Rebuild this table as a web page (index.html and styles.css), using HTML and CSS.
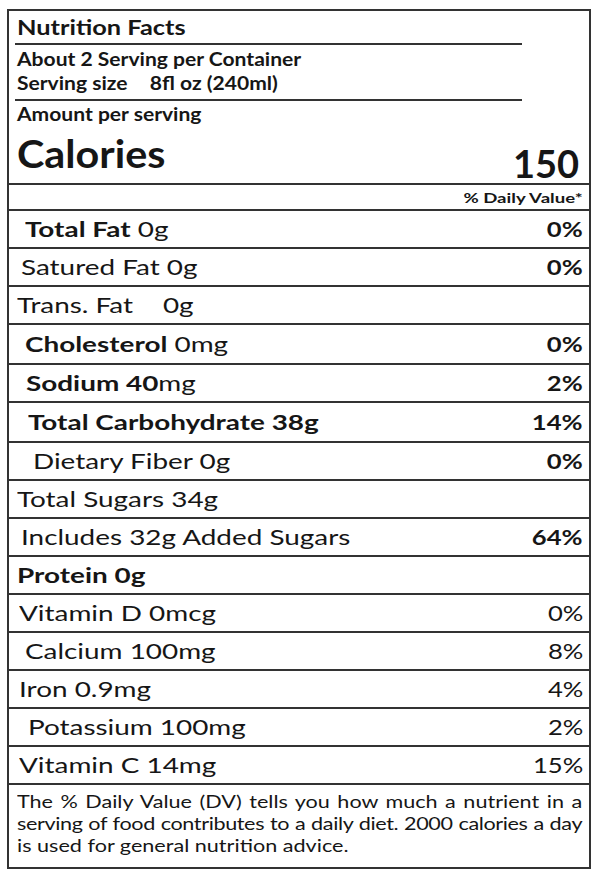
FILE: index.html
```html
<!DOCTYPE html>
<html lang="en">
<head>
<meta charset="utf-8">
<title>Nutrition Facts</title>
<link rel="stylesheet" href="styles.css">
</head>
<body>
<div class="label">
  <div class="top">
    <div class="title"><span class="title-text">Nutrition Facts</span></div>
    <div class="serving">
      <div><span class="head-text">About 2 Serving per Container</span></div>
      <div><span class="head-text">Serving size<span class="gap"></span>8fl oz (240ml)</span></div>
    </div>
    <div class="amount"><span class="head-text">Amount per serving</span></div>
    <div class="calories">
      <span class="cal-name">Calories</span>
      <span class="cal-value">150</span>
    </div>
  </div>
  <div class="dv-head"><span class="dv-text">% Daily Value*</span></div>

  <div class="row i4"><span class="lbl"><b>Total Fat</b> 0g</span><span class="pct b">0%</span></div>
  <div class="row i2"><span class="lbl">Satured Fat 0g</span><span class="pct b">0%</span></div>
  <div class="row i0"><span class="lbl">Trans. Fat<span class="gap"></span>0g</span><span class="pct"></span></div>
  <div class="row i4 tall"><span class="lbl"><b>Cholesterol</b> 0mg</span><span class="pct b">0%</span></div>
  <div class="row i5"><span class="lbl"><b>Sodium 40</b>mg</span><span class="pct b">2%</span></div>
  <div class="row i6 tall"><span class="lbl"><b>Total Carbohydrate 38g</b></span><span class="pct b">14%</span></div>
  <div class="row i7"><span class="lbl">Dietary Fiber 0g</span><span class="pct b">0%</span></div>
  <div class="row i0"><span class="lbl">Total Sugars 34g</span><span class="pct"></span></div>
  <div class="row i2"><span class="lbl">Includes 32g Added Sugars</span><span class="pct b">64%</span></div>
  <div class="row i0"><span class="lbl"><b>Protein 0g</b></span><span class="pct"></span></div>
  <div class="row i1"><span class="lbl">Vitamin D 0mcg</span><span class="pct">0%</span></div>
  <div class="row i4"><span class="lbl">Calcium 100mg</span><span class="pct">8%</span></div>
  <div class="row i1"><span class="lbl">Iron 0.9mg</span><span class="pct">4%</span></div>
  <div class="row i6"><span class="lbl">Potassium 100mg</span><span class="pct">2%</span></div>
  <div class="row i1"><span class="lbl">Vitamin C 14mg</span><span class="pct">15%</span></div>

  <div class="note">
    <div class="note-inner">
      <span class="note-line just">The % Daily Value (DV) tells you how much a nutrient in a</span>
      <span class="note-line just tight">serving of food contributes to a daily diet. 2000 calories a day</span>
      <span class="note-line">is used for general nutrition advice.</span>
    </div>
  </div>
</div>
</body>
</html>
```
FILE: styles.css
```css
* { box-sizing: border-box; }

html, body {
  margin: 0;
  padding: 0;
  background: #fff;
}

body {
  font-family: Lato, "Open Sans", "Liberation Sans", sans-serif;
  color: #161616;
}

.label {
  width: 584px;
  margin: 9px 0 0 7px;
  border: 2px solid #333;
}

/* ---------- top block ---------- */
.top {
  padding: 0 10px 0 6px;
  border-bottom: 2px solid #333;
}

.title {
  width: 507px;
  height: 34px;
  font-size: 21.5px;
  font-weight: 700;
  line-height: 32px;
  padding-left: 2px;
  border-bottom: 2px solid #333;
}

.title-text {
  display: inline-block;
  transform: scaleX(1.18);
  transform-origin: left center;
}

.serving {
  width: 507px;
  padding: 2px 0 4px 2px;
  font-size: 18px;
  font-weight: 700;
  line-height: 24px;
  border-bottom: 2px solid #333;
}

.head-text {
  display: inline-block;
  transform: scaleX(1.17);
  transform-origin: left center;
}

.serving .gap { width: 19px; }

.gap {
  display: inline-block;
  width: 22px;
}

.amount {
  padding-left: 2px;
  font-size: 18px;
  font-weight: 700;
  line-height: 26px;
}

.calories {
  display: flex;
  justify-content: space-between;
  align-items: flex-start;
  height: 56px;
  padding-left: 2px;
}

.cal-name {
  display: inline-block;
  font-size: 39px;
  font-weight: 700;
  line-height: 46px;
  padding-top: 3px;
  transform: scaleX(1.06);
  transform-origin: left center;
}

.cal-value {
  font-size: 38px;
  font-weight: 700;
  line-height: 42px;
  padding-top: 15px;
}

/* ---------- daily value header ---------- */
.dv-head {
  height: 26px;
  padding: 2px 6px 0 0;
  text-align: right;
  font-size: 14px;
  font-weight: 700;
  line-height: 22px;
  border-bottom: 2px solid #333;
}

.dv-text {
  display: inline-block;
  transform: scaleX(1.33);
  transform-origin: right center;
}

/* ---------- nutrient rows ---------- */
.row {
  display: flex;
  justify-content: space-between;
  align-items: center;
  height: 38px;
  padding-right: 6px;
  font-size: 20.5px;
  line-height: 36px;
  border-bottom: 2px solid #333;
}

.row.tall { height: 40px; }

.lbl {
  display: inline-block;
  transform: scaleX(1.36);
  transform-origin: left center;
  white-space: nowrap;
}

.pct {
  display: inline-block;
  transform: scaleX(1.25);
  transform-origin: right center;
}

.row b, .pct.b { font-weight: 700; }

.i0 { padding-left: 8px; }
.i1 { padding-left: 10px; }
.i2 { padding-left: 12px; }
.i4 { padding-left: 16px; }
.i5 { padding-left: 17px; }
.i6 { padding-left: 19px; }
.i7 { padding-left: 24px; }

/* ---------- footnote ---------- */
.note {
  padding: 6px 6px 10px 8px;
  font-size: 17px;
  line-height: 22px;
}

.note-inner {
  width: 445px;
  transform: scaleX(1.27);
  transform-origin: left center;
}

.note-line {
  display: block;
  white-space: nowrap;
}

.note-line.just {
  text-align: justify;
  text-align-last: justify;
}

.note-line.tight {
  letter-spacing: -0.3px;
  word-spacing: -1px;
}
```
